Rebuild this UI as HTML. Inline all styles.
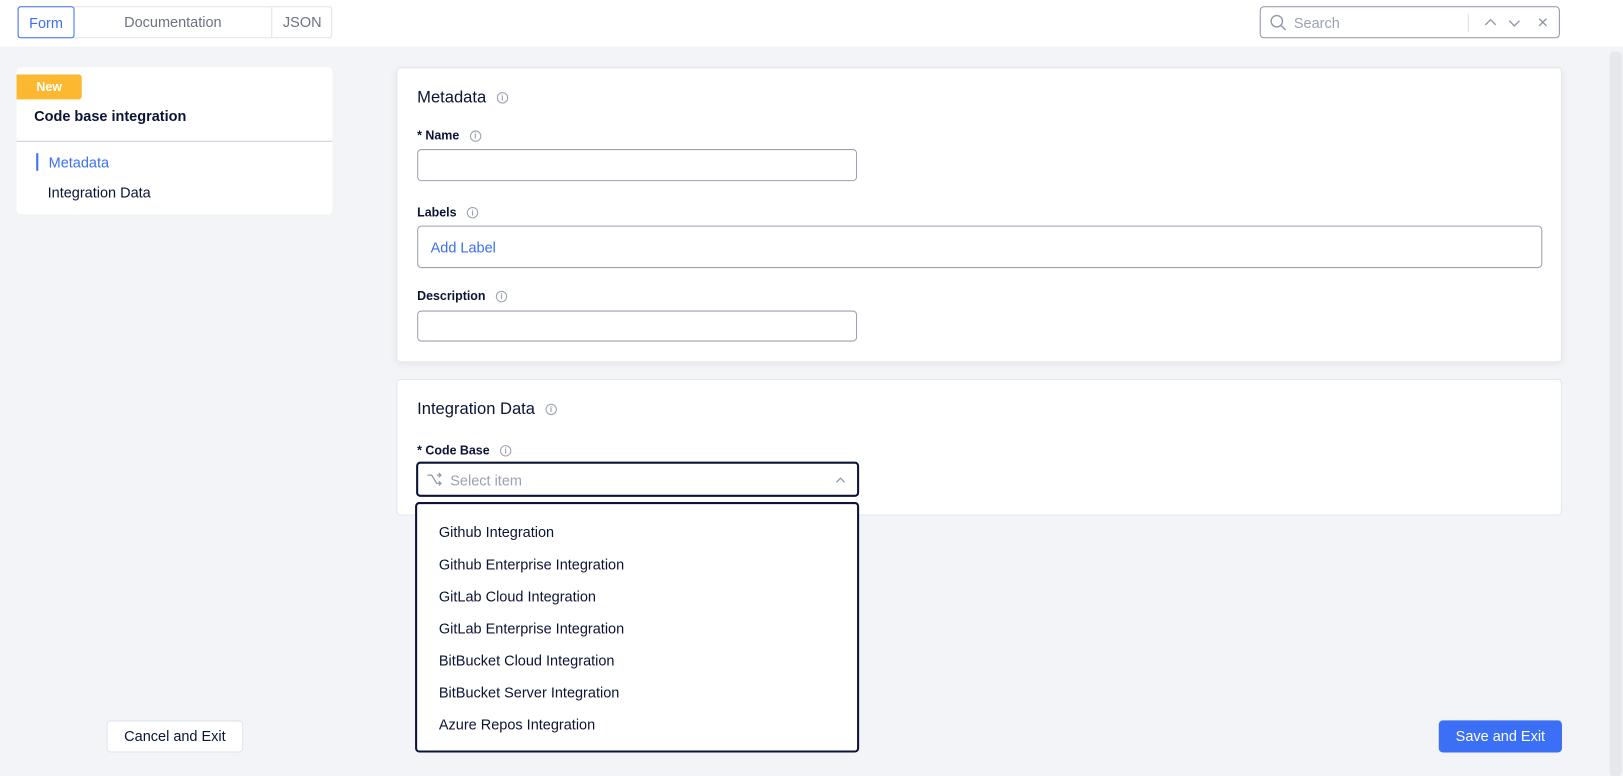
<!DOCTYPE html>
<html><head><style>
*{box-sizing:border-box;margin:0;padding:0}
body{width:1623px;height:773px;overflow:hidden;background:#f3f4f7;font-family:"Liberation Sans",sans-serif;color:#0b1437;position:relative}
#w{position:absolute;left:0;top:0;width:1568px;height:747px;transform:scale(1.0351);transform-origin:0 0}
.abs{position:absolute}
.hdr{left:0;top:0;width:1568px;height:45px;background:#fff}
.tabs{left:17px;top:6px;width:304px;height:31px;border:1px solid #dfe3ea;border-radius:3px;background:#fff}
.tab{position:absolute;top:0;height:29px;line-height:29px;font-size:14px;color:#6b7280;text-align:center}
.card{background:#fff;border:1px solid #e3e6ee;border-radius:4px}
.lbl{font-size:12px;font-weight:bold;color:#0b1437}
.info{display:inline-block;width:11px;height:11px;border:1px solid #9aa1b1;border-radius:50%;font-size:8px;line-height:9px;text-align:center;color:#9aa1b1;font-weight:bold;vertical-align:middle;margin-left:10px}
.inp{border:1px solid #9aa1b1;border-radius:4px;background:#fff}
.opt{position:absolute;left:21px;font-size:14px;color:#0b1437}
.btn{font-size:14px;text-align:center;border-radius:4px}
</style></head><body><div id="w">
<div class="abs hdr"></div>
<div class="abs tabs">
 <div class="tab" style="left:-1px;top:-1px;width:55px;height:31px;line-height:31px;border:1px solid #3b6ff5;border-radius:3px;color:#3b6ff5">Form</div>
 <div class="tab" style="left:54px;width:191px;border-right:1px solid #dfe3ea">Documentation</div>
 <div class="tab" style="left:245px;width:58px">JSON</div>
</div>
<div class="abs" style="left:1217px;top:6px;width:290px;height:31px;border:1px solid #8e96a8;border-radius:4px;background:#fff">
 <svg class="abs" style="left:8px;top:6px" width="18" height="18" viewBox="0 0 18 18"><circle cx="7.5" cy="7.5" r="5.5" fill="none" stroke="#8e96a8" stroke-width="1.3"/><path d="M11.5 11.5l4.5 4.5" stroke="#8e96a8" stroke-width="1.3"/></svg>
 <span class="abs" style="left:32px;top:7px;font-size:14px;color:#9aa1b1">Search</span>
 <div class="abs" style="left:200px;top:6px;width:1px;height:18px;background:#dfe3ea"></div>
 <svg class="abs" style="left:215px;top:8px" width="70" height="14" viewBox="0 0 70 14"><path d="M2 9l5-5 5 5M25 5l5 5 5-5" fill="none" stroke="#8e96a8" stroke-width="1.3"/><path d="M54 3l7 7M61 3l-7 7" stroke="#8e96a8" stroke-width="1.3"/></svg>
</div>
<div class="abs" style="left:1555px;top:50px;width:12px;height:700px;background:#e6e8ee;border-radius:4px"></div>

<div class="abs card" style="left:16px;top:65px;width:305px;height:142px;border:none">
 <div class="abs" style="left:0;top:7px;width:63px;height:24px;background:#fdb832;border-radius:0 3px 3px 0;color:#fff;font-size:12px;font-weight:bold;text-align:center;line-height:24px">New</div>
 <div class="abs" style="left:17px;top:39px;font-size:14px;font-weight:bold">Code base integration</div>
 <div class="abs" style="left:0;top:71px;width:305px;height:1px;background:#c9d0de"></div>
 <div class="abs" style="left:19px;top:83px;width:2px;height:17px;background:#3b6ff5"></div>
 <div class="abs" style="left:31px;top:84px;font-size:14px;color:#3b6ff5">Metadata</div>
 <div class="abs" style="left:30px;top:113px;font-size:14px">Integration Data</div>
</div>

<div class="abs card" style="left:383px;top:65px;width:1126px;height:285px;box-shadow:0 2px 8px rgba(0,0,0,.06)">
 <div class="abs" style="left:19px;top:20px;font-size:16px">Metadata<span class="info">i</span></div>
 <div class="abs lbl" style="left:19px;top:58px">* Name<span class="info">i</span></div>
 <div class="abs inp" style="left:19px;top:78px;width:425px;height:31px"></div>
 <div class="abs lbl" style="left:19px;top:132px">Labels<span class="info">i</span></div>
 <div class="abs inp" style="left:19px;top:152px;width:1087px;height:41px"><span class="abs" style="left:12px;top:12px;font-size:14px;color:#3b6ff5">Add Label</span></div>
 <div class="abs lbl" style="left:19px;top:213px">Description<span class="info">i</span></div>
 <div class="abs inp" style="left:19px;top:234px;width:425px;height:30px"></div>
</div>

<div class="abs card" style="left:383px;top:366px;width:1126px;height:132px">
 <div class="abs" style="left:19px;top:20px;font-size:16px">Integration Data<span class="info">i</span></div>
 <div class="abs lbl" style="left:19px;top:61px">* Code Base<span class="info">i</span></div>
</div>
<div class="abs" style="left:402px;top:446px;width:428px;height:34px;border:2px solid #0b1437;border-radius:4px;background:#fff">
 <svg class="abs" style="left:8px;top:8px" width="16" height="14" viewBox="0 0 16 14"><path d="M1 3h4l5 8h4M10 3h4M12 1l2 2-2 2M12 9l2 2-2 2" fill="none" stroke="#8e96a8" stroke-width="1.2"/></svg>
 <span class="abs" style="left:31px;top:8px;font-size:14px;color:#9aa1b1">Select item</span>
 <svg class="abs" style="left:403px;top:12px" width="10" height="8" viewBox="0 0 10 8"><path d="M1 6l4-4 4 4" fill="none" stroke="#8e96a8" stroke-width="1.2"/></svg>
</div>
<div class="abs" style="left:401px;top:485px;width:429px;height:242px;border:2px solid #0b1437;border-radius:4px;background:#fff">
 <div class="opt" style="top:19px">Github Integration</div>
 <div class="opt" style="top:50px">Github Enterprise Integration</div>
 <div class="opt" style="top:81px">GitLab Cloud Integration</div>
 <div class="opt" style="top:112px">GitLab Enterprise Integration</div>
 <div class="opt" style="top:143px">BitBucket Cloud Integration</div>
 <div class="opt" style="top:174px">BitBucket Server Integration</div>
 <div class="opt" style="top:205px">Azure Repos Integration</div>
</div>

<div class="abs btn" style="left:103px;top:696px;width:132px;height:31px;line-height:29px;border:1px solid #dfe3ea;background:#fff">Cancel and Exit</div>
<div class="abs btn" style="left:1390px;top:696px;width:119px;height:31px;line-height:31px;background:#3b6ff5;color:#fff">Save and Exit</div>
</div></body></html>
